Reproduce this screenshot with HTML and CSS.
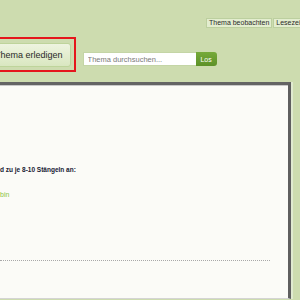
FILE: index.html
```html
<!DOCTYPE html>
<html lang="de">
<head>
<meta charset="UTF-8">
<meta name="viewport" content="width=device-width, initial-scale=1.0">
<title>Thema</title>
<link rel="stylesheet" href="styles.css">
</head>
<body>
<div class="page">
    <div class="header">
        <div class="tools">
            <a class="tool" href="#">Thema beobachten</a>
            <a class="tool" href="#">Lesezeichen setzen</a>
        </div>
        <div class="actions">
            <div class="highlight">
                <button class="doneBtn">Thema erledigen</button>
            </div>
            <form class="search" onsubmit="return false">
                <input class="searchInput" type="text" placeholder="Thema durchsuchen...">
                <button class="searchBtn">Los</button>
            </form>
        </div>
    </div>
    <div class="main">
        <div class="post">
            <p class="step"><span class="cut">Die Stiele waschen un</span>d zu je 8-10 Stängeln an:</p>
            <p class="more"><a class="postLink" href="#"><span class="cut">Küchengarn zum Zusammen</span>bin</a></p>
            <div class="sep"></div>
        </div>
        <div class="sidebar"></div>
    </div>
</div>
</body>
</html>
```

FILE: styles.css
```css
body, html {
    height: 100%;
    margin: 0;
    font-family: "Liberation Sans", Arial, sans-serif;
    background-color: #cddcaf;
    overflow: hidden;
}
.page {
    width: 300px;
}
.header {
    padding-top: 18px;
    padding-bottom: 10px;
    height: 54px;
}
.tools {
    display: flex;
    gap: 1px;
    padding-left: 206px;
    white-space: nowrap;
}
.tool {
    display: block;
    font-size: 7px;
    line-height: 8px;
    padding: 0 2px;
    color: #2b2b2b;
    text-decoration: none;
    background-color: #e3edcf;
    border: 1px solid #bccf9f;
}
.actions {
    display: flex;
    align-items: flex-start;
    margin-top: 9px;
    margin-left: -19px;
}
.highlight {
    border: 2px solid #e5161c;
    padding: 4px 3px 3px 3px;
}
.doneBtn {
    display: block;
    height: 24px;
    padding: 0 7px 0 8px;
    font-family: "Liberation Sans", Arial, sans-serif;
    font-size: 9px;
    color: #2a2a2a;
    background: linear-gradient(#eef4e0, #d9e7c0);
    border: 1px solid #bed49b;
    border-radius: 3px;
}
.search {
    display: flex;
    margin: 15px 0 0 7px;
}
.searchInput {
    box-sizing: border-box;
    width: 113px;
    height: 14px;
    margin: 0;
    padding: 0 4px;
    font-family: "Liberation Sans", Arial, sans-serif;
    font-size: 7.5px;
    background-color: #ffffff;
    border: 1px solid #c4d5a6;
    border-right: 0;
    outline: none;
}
.searchInput::placeholder {
    color: #7a7a7a;
}
.searchBtn {
    box-sizing: border-box;
    width: 21px;
    height: 14px;
    margin: 0;
    padding: 0;
    font-family: "Liberation Sans", Arial, sans-serif;
    font-size: 7px;
    color: #ffffff;
    background: linear-gradient(#76aa3a, #5d9128);
    border: 0;
    border-radius: 0 3px 3px 0;
}
.main {
    display: flex;
}
.post {
    box-sizing: border-box;
    flex: 1;
    height: 217px;
    padding-top: 1px;
    background-color: #fbfbf7;
    border-top: 3px solid #646464;
    border-right: 3px solid #5f5f5f;
    border-bottom: 1px solid #d4d4d4;
    box-shadow: inset 0 1px 0 #c9c9c9;
    overflow: hidden;
}
.step {
    margin: 79px 0 0 0;
    font-size: 6.5px;
    font-weight: bold;
    line-height: 10px;
    color: #172033;
    white-space: nowrap;
}
.more {
    margin: 15px 0 0 0;
    font-size: 7px;
    line-height: 10px;
    white-space: nowrap;
}
.cut {
    display: inline-block;
    margin-left: -80px;
    width: 80px;
    overflow: hidden;
    text-align: right;
    vertical-align: top;
}
.postLink {
    color: #8cc43f;
    text-decoration: none;
}
.sep {
    margin: 60px 18px 0 0;
    border-top: 1px dotted #a8a8a8;
}
.sidebar {
    width: 7px;
    border-left: 2px solid #e0ead0;
}
```
